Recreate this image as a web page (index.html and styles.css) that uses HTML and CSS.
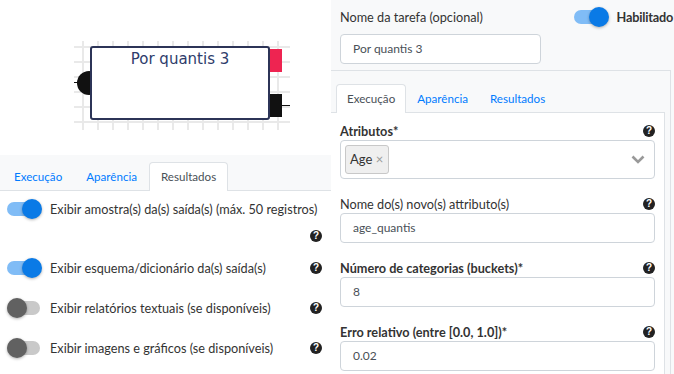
FILE: index.html
```html
<!DOCTYPE html>
<html lang="pt">
<head>
    <meta charset="UTF-8">
    <title>Por quantis</title>
    <link rel="stylesheet" href="styles.css">
</head>
<body>

<div class="left">
    <div class="diagram">
        <div class="grid"></div>
        <div class="wire wire-in"></div>
        <div class="port-in"></div>
        <div class="node">Por quantis 3</div>
        <div class="port port-red"></div>
        <div class="port port-out"></div>
        <div class="wire wire-out"></div>
    </div>

    <div class="tabs tabs-left">
        <a class="tab">Execução</a>
        <a class="tab">Aparência</a>
        <a class="tab active">Resultados</a>
    </div>

    <div class="options">
        <div class="opt-row first">
            <span class="switch on"><span class="knob"></span></span>
            <span class="opt-label">Exibir amostra(s) da(s) saída(s) (máx. 50 registros)</span>
        </div>
        <div class="help-line"><span class="help">?</span></div>
        <div class="opt-row">
            <span class="switch on"><span class="knob"></span></span>
            <span class="opt-label">Exibir esquema/dicionário da(s) saída(s)</span>
            <span class="help">?</span>
        </div>
        <div class="opt-row">
            <span class="switch"><span class="knob"></span></span>
            <span class="opt-label">Exibir relatórios textuais (se disponíveis)</span>
            <span class="help">?</span>
        </div>
        <div class="opt-row">
            <span class="switch"><span class="knob"></span></span>
            <span class="opt-label">Exibir imagens e gráficos (se disponíveis)</span>
            <span class="help">?</span>
        </div>
    </div>
</div>

<div class="right">
    <div class="task-head">
        <div class="task-row">
            <label>Nome da tarefa (opcional)</label>
            <div class="enabled">
                <span class="switch on"><span class="knob"></span></span>
                <b>Habilitado</b>
            </div>
        </div>
        <div class="input task-name">Por quantis 3</div>
    </div>

    <div class="card">
        <div class="tabs tabs-right">
            <a class="tab active">Execução</a>
            <a class="tab">Aparência</a>
            <a class="tab">Resultados</a>
        </div>
        <div class="pane">
            <div class="field">
                <div class="field-label"><b>Atributos*</b><span class="help">?</span></div>
                <div class="select">
                    <span class="chip">Age <span class="chip-x">×</span></span>
                    <svg class="chevron" width="14" height="9" viewBox="0 0 14 9"><path d="M1.5 1.5 L7 7 L12.5 1.5" fill="none" stroke="#999" stroke-width="2.6"/></svg>
                </div>
            </div>
            <div class="field">
                <div class="field-label"><span>Nome do(s) novo(s) attributo(s)</span><span class="help">?</span></div>
                <div class="input">age_quantis</div>
            </div>
            <div class="field">
                <div class="field-label"><b>Número de categorias (buckets)*</b><span class="help">?</span></div>
                <div class="input">8</div>
            </div>
            <div class="field">
                <div class="field-label"><b>Erro relativo (entre [0.0, 1.0])*</b><span class="help">?</span></div>
                <div class="input">0.02</div>
            </div>
        </div>
    </div>
</div>

</body>
</html>
```

FILE: styles.css
```css
body {
    margin: 0;
    font-family: Lato, 'Open Sans', Arial, sans-serif;
    font-size: 12.7px;
    color: #333;
    display: flex;
    height: 374px;
    overflow: hidden;
    background-color: white;
}
.left {
    width: 331px;
    flex-shrink: 0;
}
/* Diagram */
.diagram {
    position: relative;
    height: 155px;
}
.grid {
    position: absolute;
    left: 74px;
    top: 41px;
    width: 216px;
    height: 89px;
    background-image:
        linear-gradient(to right, #e9e9e9 2px, transparent 2px),
        linear-gradient(to bottom, #e9e9e9 2px, transparent 2px);
    background-size: 15px 15px;
    background-position: 8px 0, 0 5px;
}
.node {
    position: absolute;
    left: 90px;
    top: 46px;
    width: 180px;
    height: 74px;
    box-sizing: border-box;
    border: 2px solid #2c3457;
    border-radius: 3px;
    background-color: white;
    text-align: center;
    font-family: 'DejaVu Sans', Verdana, sans-serif;
    font-size: 15px;
    line-height: 18px;
    padding-top: 2px;
    color: #2e3c6b;
}
.port-in {
    position: absolute;
    left: 77px;
    top: 71px;
    width: 24px;
    height: 24px;
    border-radius: 50%;
    background-color: #111;
}
.port {
    position: absolute;
    left: 270px;
    width: 12px;
    height: 23px;
}
.port-red {
    top: 49px;
    background-color: #ee2451;
}
.port-out {
    top: 94px;
    background-color: #111;
}
.wire {
    position: absolute;
    height: 1px;
    background-color: #111;
}
.wire-in {
    left: 74px;
    top: 82px;
    width: 6px;
}
.wire-out {
    left: 282px;
    top: 105px;
    width: 8px;
}
/* Tabs */
.tabs {
    display: flex;
    background-color: #f8f9fa;
    border-bottom: 1px solid #dee2e6;
    flex-shrink: 0;
}
.tabs-left {
    padding: 7px 0 0 2px;
}
.tabs-right {
    padding: 13px 0 0 5px;
    margin-right: 5px;
}
.tab {
    height: 27px;
    line-height: 27px;
    padding: 0 11px;
    color: #007bff;
    border: 1px solid transparent;
    border-bottom: none;
    margin-bottom: -1px;
    font-size: 11.6px;
}
.tabs-right .tab {
    padding: 0 10px;
}
.tab.active {
    color: #495057;
    background-color: white;
    border-color: #dee2e6;
    border-radius: 4px 4px 0 0;
    height: 28px;
}
/* Switches */
.switch {
    position: relative;
    display: inline-block;
    width: 35px;
    height: 20px;
    flex-shrink: 0;
}
.switch::before {
    content: "";
    position: absolute;
    left: 0;
    top: 3px;
    width: 33px;
    height: 14px;
    border-radius: 7px;
    background-color: #c9c9c9;
}
.switch.on::before {
    background-color: #80bcf6;
}
.knob {
    position: absolute;
    left: 0;
    top: 0;
    width: 20px;
    height: 20px;
    border-radius: 50%;
    background-color: #616161;
    box-shadow: 0 1px 3px rgba(0, 0, 0, 0.3);
}
.switch.on .knob {
    left: 15px;
    background-color: #0a7ae6;
}
/* Help icon */
.help {
    display: inline-block;
    width: 12px;
    height: 12px;
    border-radius: 50%;
    background-color: #222;
    color: white;
    font-family: Arial, sans-serif;
    font-size: 10px;
    font-weight: bold;
    line-height: 12px;
    text-align: center;
    flex-shrink: 0;
}
/* Options */
.options {
    padding: 0 9px 0 7px;
}
.opt-row {
    display: flex;
    align-items: center;
    height: 40px;
}
.opt-row.first {
    height: 36px;
}
.opt-label {
    flex: 1;
    margin-left: 8px;
    color: #333;
    white-space: nowrap;
}
.help-line {
    display: flex;
    justify-content: flex-end;
    height: 21px;
    padding-top: 3px;
    box-sizing: border-box;
}
/* Right panel */
.right {
    flex: 1;
    min-width: 0;
    background-color: #f8f9fa;
    display: flex;
    flex-direction: column;
}
.task-head {
    padding: 8px 0 6px 9px;
}
.task-row {
    display: flex;
    justify-content: space-between;
    align-items: center;
    height: 18px;
    margin-bottom: 8px;
}
.enabled {
    display: flex;
    align-items: center;
    gap: 8px;
    margin-right: 1px;
}
.enabled b {
    color: #333;
    letter-spacing: -0.2px;
}
.input {
    height: 30px;
    box-sizing: border-box;
    border: 1px solid #ced4da;
    border-radius: 4px;
    background-color: white;
    padding: 0 12px;
    line-height: 28px;
    font-size: 12px;
    color: #495057;
}
.task-name {
    width: 201px;
}
.card {
    flex: 1;
    min-height: 0;
    display: flex;
    flex-direction: column;
    border-top: 1px solid #dee2e6;
    border-right: 1px solid #dee2e6;
    margin-right: 3px;
    background-color: #f8f9fa;
}
.pane {
    flex: 1;
    background-color: white;
    margin-right: 5px;
    border-right: 1px solid #dee2e6;
    padding: 8px 9px 0 9px;
}
.field {
    margin-bottom: 15px;
}
.field-label {
    display: flex;
    justify-content: space-between;
    align-items: center;
    height: 19px;
}
.select {
    display: flex;
    align-items: center;
    justify-content: space-between;
    height: 39px;
    box-sizing: border-box;
    border: 1px solid #ced4da;
    border-radius: 4px;
    background-color: white;
    padding: 0 9px 0 4px;
}
.chip {
    height: 29px;
    box-sizing: border-box;
    line-height: 27px;
    padding: 0 5px 0 4px;
    background-color: #efefef;
    border: 1px solid #c8c8c8;
    border-radius: 3px;
    font-size: 13px;
    color: #333;
}
.chip-x {
    color: #999;
}
```
